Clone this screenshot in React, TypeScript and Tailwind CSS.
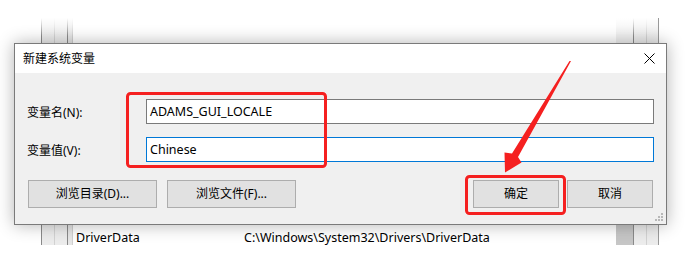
const font = { fontFamily: '"Noto Sans", "Noto Sans CJK SC", sans-serif' }

const DialogButton = ({ label, width }: { label: string; width: string }) => (
  <button
    className={`h-[28px] ${width} border border-[#adadad] bg-[#e1e1e1] text-[12px] text-black leading-none`}
  >
    {label}
  </button>
)

const BackWindow = () => (
  <div className="relative ml-[41px] mt-[18px] flex h-[227px] w-[618px] border-r border-[#9a9a9a]">
    <div className="w-[13px] border-l border-[#8a8a8a] bg-[#ececec]" />
    <div className="w-[13px] border-l border-[#d2d2d2] bg-[#ececec]" />
    <div className="w-[5px] border-l border-[#8a8a8a] bg-[#e6e6e6]" />
    <div className="flex flex-1 flex-col justify-end overflow-hidden border-l border-[#d0d0d0] bg-white">
      <div className="flex h-[20px] items-start pt-[5px] text-[12.5px] leading-[16px] text-black" style={font}>
        <span className="w-[171px] pl-[3px]">DriverData</span>
        <span>C:\Windows\System32\Drivers\DriverData</span>
      </div>
    </div>
    <div className="flex w-[17px] flex-col justify-end bg-[#f0f0f0]">
      <div className="h-[20px] bg-[#c6c6c6]" />
    </div>
    <div className="w-[13px] border-l border-[#8a8a8a] bg-[#ececec]" />
    <div className="w-[12px] border-l border-[#d2d2d2] bg-[#ececec]" />
    <div className="absolute inset-x-0 top-0 h-[18px] bg-gradient-to-b from-white to-transparent" />
  </div>
)

const Dialog = () => (
  <div
    className="absolute left-[14px] top-[43px] flex h-[182px] w-[653px] flex-col border border-[#7a7a7a] bg-[#f0f0f0] shadow-[0_0_16px_rgba(0,0,0,0.3)]"
    style={font}
  >
    <div className="flex h-[29px] items-center justify-between bg-white pl-[8px] pr-[11px]">
      <span className="text-[12px] text-black">新建系统变量</span>
      <svg width="11" height="11" viewBox="0 0 11 11">
        <path d="M0.5 0.5 L10.5 10.5 M10.5 0.5 L0.5 10.5" stroke="#000" strokeWidth="1" />
      </svg>
    </div>
    <div className="flex flex-1 flex-col px-[12px] pt-[26px]">
      <div className="flex items-center">
        <span className="w-[119px] pt-[2px] text-[12px] text-black">变量名(N):</span>
        <div className="flex h-[25px] flex-1 items-center border border-[#7a7a7a] bg-white pl-[3px] pt-[1px] text-[12.5px] text-black">
          ADAMS_GUI_LOCALE
        </div>
      </div>
      <div className="mt-[13px] flex items-center">
        <span className="w-[119px] pt-[2px] text-[12px] text-black">变量值(V):</span>
        <div className="flex h-[25px] flex-1 items-center border border-[#0078d7] bg-white pl-[3px] pt-[1px] text-[12.5px] text-black">
          Chinese
        </div>
      </div>
      <div className="mt-[18px] flex pl-[1px] pr-[1px]">
        <div className="flex gap-[10px]">
          <DialogButton label="浏览目录(D)..." width="w-[129px]" />
          <DialogButton label="浏览文件(F)..." width="w-[129px]" />
        </div>
        <div className="ml-auto flex gap-[8px]">
          <DialogButton label="确定" width="w-[86px]" />
          <DialogButton label="取消" width="w-[86px]" />
        </div>
      </div>
    </div>
    <svg className="absolute bottom-[2px] right-[2px]" width="10" height="10" viewBox="0 0 10 10">
      <g fill="#b8b8b8">
        <rect x="7" y="1" width="2" height="2" />
        <rect x="4" y="4" width="2" height="2" />
        <rect x="7" y="4" width="2" height="2" />
        <rect x="1" y="7" width="2" height="2" />
        <rect x="4" y="7" width="2" height="2" />
        <rect x="7" y="7" width="2" height="2" />
      </g>
    </svg>
  </div>
)

const Annotations = () => (
  <svg className="pointer-events-none absolute left-0 top-0" width="697" height="267" viewBox="0 0 697 267">
    <rect x="127.5" y="93.5" width="198" height="73" rx="3" fill="none" stroke="#f52020" strokeWidth="3" />
    <rect x="466.5" y="176.5" width="98" height="37" rx="3" fill="none" stroke="#f52020" strokeWidth="3" />
    <polygon
      points="571,61 518,157 521.5,162.5 505,172.5 504.5,152.5 512,153.5 569.5,61"
      fill="#f52020"
    />
  </svg>
)

export default function App() {
  return (
    <div className="relative h-[267px] w-[697px] overflow-hidden bg-white">
      <BackWindow />
      <Dialog />
      <Annotations />
    </div>
  )
}
